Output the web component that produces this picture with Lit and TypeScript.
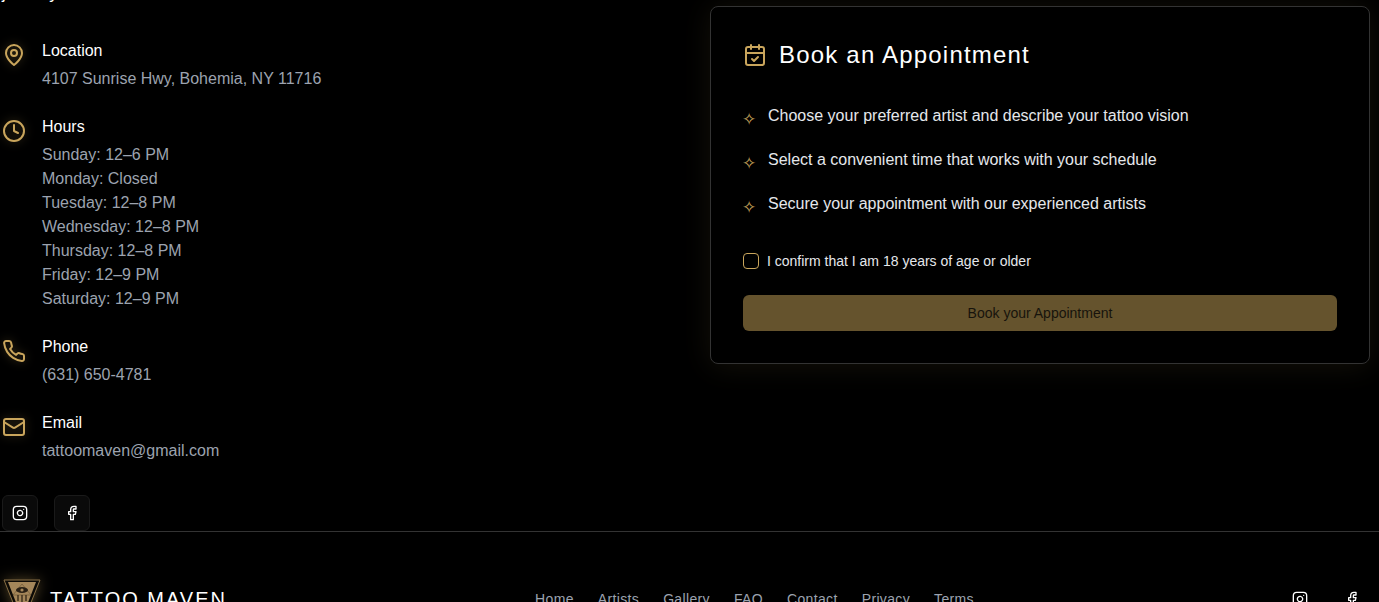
import { LitElement, html, css, svg } from "lit";
import { customElement } from "lit/decorators.js";

const ic = (body: unknown, cls = "") => html`<svg class=${cls} viewBox="0 0 24 24" fill="none" stroke="currentColor" stroke-width="2" stroke-linecap="round" stroke-linejoin="round">${body}</svg>`;
const pin = svg`<path d="M20 10c0 6-8 12-8 12s-8-6-8-12a8 8 0 0 1 16 0Z"/><circle cx="12" cy="10" r="3"/>`;
const clock = svg`<circle cx="12" cy="12" r="10"/><polyline points="12 6 12 12 16 14"/>`;
const phone = svg`<path d="M22 16.92v3a2 2 0 0 1-2.18 2 19.79 19.79 0 0 1-8.63-3.07 19.5 19.5 0 0 1-6-6 19.79 19.79 0 0 1-3.07-8.67A2 2 0 0 1 4.11 2h3a2 2 0 0 1 2 1.72 12.84 12.84 0 0 0 .7 2.81 2 2 0 0 1-.45 2.11L8.09 9.91a16 16 0 0 0 6 6l1.27-1.27a2 2 0 0 1 2.11-.45 12.84 12.84 0 0 0 2.81.7A2 2 0 0 1 22 16.92z"/>`;
const mail = svg`<rect x="2" y="4" width="20" height="16" rx="2"/><path d="m22 7-8.97 5.7a1.94 1.94 0 0 1-2.06 0L2 7"/>`;
const cal = svg`<path d="M8 2v4"/><path d="M16 2v4"/><rect x="3" y="4" width="18" height="18" rx="2"/><path d="M3 10h18"/><path d="m9 16 2 2 4-4"/>`;
const insta = svg`<rect x="2" y="2" width="20" height="20" rx="5" ry="5"/><path d="M16 11.37A4 4 0 1 1 12.63 8 4 4 0 0 1 16 11.37z"/><line x1="17.5" y1="6.5" x2="17.51" y2="6.5"/>`;
const fb = svg`<path d="M18 2h-3a5 5 0 0 0-5 5v3H7v4h3v8h4v-8h3l1-4h-4V7a1 1 0 0 1 1-1h3z"/>`;

const contacts: [unknown, string, string[]][] = [
  [pin, "Location", ["4107 Sunrise Hwy, Bohemia, NY 11716"]],
  [clock, "Hours", ["Sunday: 12–6 PM", "Monday: Closed", "Tuesday: 12–8 PM", "Wednesday: 12–8 PM", "Thursday: 12–8 PM", "Friday: 12–9 PM", "Saturday: 12–9 PM"]],
  [phone, "Phone", ["(631) 650-4781"]],
  [mail, "Email", ["tattoomaven@gmail.com"]],
];
const steps = [
  "Choose your preferred artist and describe your tattoo vision",
  "Select a convenient time that works with your schedule",
  "Secure your appointment with our experienced artists",
];
const links = ["Home", "Artists", "Gallery", "FAQ", "Contact", "Privacy", "Terms"];

@customElement("app-root")
export class AppRoot extends LitElement {
  static styles = css`
    :host { display: block; height: 602px; overflow: hidden; background: #000; color: #fff; font-family: "Liberation Sans", Arial, sans-serif; }
    .grid { display: grid; grid-template-columns: 660px 660px; gap: 48px; padding: 0 9px 0 2px; align-items: start; }
    .left { display: flex; flex-direction: column; }
    .intro { font-size: 17px; line-height: 24px; height: 24px; margin-top: -18px; margin-bottom: 33px; color: #fff; }
    .contacts { display: flex; flex-direction: column; gap: 24px; }
    .item { display: flex; gap: 16px; }
    .item svg { width: 24px; height: 24px; flex: none; margin-top: 4px; color: #c9a55c; filter: drop-shadow(0 0 5px rgba(201,165,92,.35)); }
    .item h3 { margin: 0 0 4px; font-size: 16px; font-weight: 400; line-height: 24px; color: #fff; }
    .item p { margin: 0; font-size: 16px; line-height: 24px; color: #9ca3af; }
    .social { display: flex; gap: 16px; margin-top: 32px; }
    .social a { width: 36px; height: 36px; box-sizing: border-box; display: flex; align-items: center; justify-content: center; background: #0a0a0a; border: 1px solid #1a1a1a; border-radius: 6px; color: #fff; }
    .social svg, .fsocial svg { width: 16px; height: 16px; }
    .card { margin-top: 6px; box-sizing: border-box; border: 1px solid #333; border-radius: 8px; padding: 32px; background: #000; box-shadow: 0 2px 30px rgba(201,165,92,.1); }
    .head { display: flex; align-items: center; gap: 12px; height: 32px; }
    .head svg { width: 24px; height: 24px; color: #c9a55c; }
    .head h2 { margin: 0; font-size: 24px; line-height: 32px; font-weight: 400; letter-spacing: 1.2px; color: #fff; }
    .steps { list-style: none; margin: 33px 0 35px; padding: 0; display: flex; flex-direction: column; gap: 20px; }
    .steps li { display: flex; gap: 12px; font-size: 16px; line-height: 24px; color: #e5e7eb; }
    .star { width: 13px; flex: none; color: #c9a55c; font-size: 17px; position: relative; top: 4px; left: -1px; }
    .check { display: flex; align-items: center; gap: 8px; font-size: 14px; line-height: 20px; color: #e5e7eb; }
    .box { width: 16px; height: 16px; box-sizing: border-box; border: 1px solid #c9a55c; border-radius: 4px; }
    .btn { margin-top: 24px; height: 36px; border-radius: 6px; background: #65532d; color: #17130c; font-size: 14px; display: flex; align-items: center; justify-content: center; }
    .rule { border-top: 1px solid #333; height: 0; }
    .footer { display: flex; justify-content: space-between; align-items: center; padding: 43px 9px 0 2px; }
    .brand { display: flex; align-items: center; gap: 8px; }
    .brand svg { width: 40px; height: 48px; flex: none; filter: drop-shadow(0 0 7px rgba(201,165,92,.4)); }
    .brand span { font-size: 20px; letter-spacing: 2px; color: #fff; }
    .nav { display: flex; gap: 24px; font-size: 14px; letter-spacing: .35px; color: #9ca3af; }
    .fsocial { display: flex; gap: 16px; }
    .fsocial a { width: 36px; height: 36px; display: flex; align-items: center; justify-content: center; color: #fff; }
  `;

  render() {
    return html`<div>
      <div class="grid">
        <div class="left">
          <div class="intro">journey</div>
          <div class="contacts">
            ${contacts.map(([icon, title, lines]) => html`<div class="item">${ic(icon)}<div><h3>${title}</h3>${lines.map((l) => html`<p>${l}</p>`)}</div></div>`)}
          </div>
          <div class="social"><a>${ic(insta)}</a><a>${ic(fb)}</a></div>
        </div>
        <div class="card">
          <div class="head">${ic(cal)}<h2>Book an Appointment</h2></div>
          <ul class="steps">${steps.map((s) => html`<li><span class="star">✧</span><span>${s}</span></li>`)}</ul>
          <div class="check"><span class="box"></span><span>I confirm that I am 18 years of age or older</span></div>
          <div class="btn">Book your Appointment</div>
        </div>
      </div>
      <div class="rule"></div>
      <div class="footer">
        <div class="brand">
          <svg viewBox="0 0 40 48">
            <path d="M2 5h36L20 50z" fill="#0c0a06" stroke="#8a7146" stroke-width="1"/>
            <path d="M6 7h28L20 43z" fill="#a5875a"/>
            <path d="M20 9l-9 11h18z" fill="none" stroke="#6e5735" stroke-width=".7"/>
            <ellipse cx="20" cy="15" rx="6" ry="3" fill="#2a2115"/>
            <circle cx="20" cy="15" r="1.6" fill="#a5875a"/>
            <path d="M16 20v6M20 20v8M24 20v6" stroke="#3a2d1b" stroke-width="1.4"/>
          </svg>
          <span>TATTOO MAVEN</span>
        </div>
        <div class="nav">${links.map((l) => html`<span>${l}</span>`)}</div>
        <div class="fsocial"><a>${ic(insta)}</a><a>${ic(fb)}</a></div>
      </div>
    </div>`;
  }
}
